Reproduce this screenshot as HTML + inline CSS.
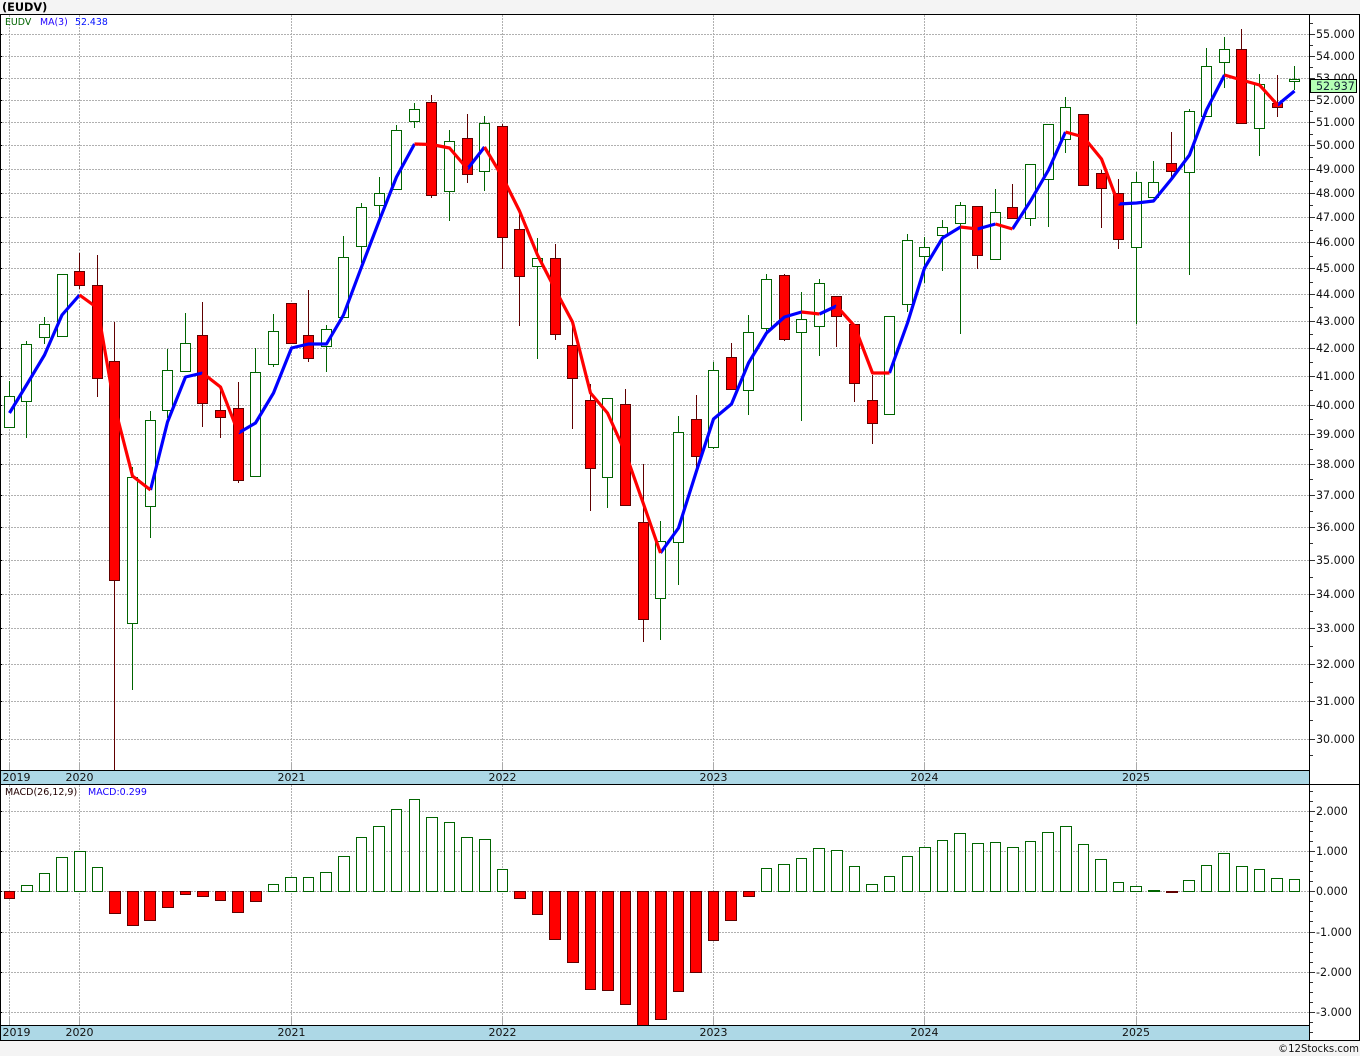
<!DOCTYPE html>
<html><head><meta charset="utf-8"><title>EUDV</title>
<style>html,body{margin:0;padding:0;background:#f4f4f4}svg{display:block}text{font-family:"DejaVu Sans","Liberation Sans",sans-serif}</style></head>
<body>
<svg width="1360" height="1056" viewBox="0 0 1360 1056" xmlns="http://www.w3.org/2000/svg">
<rect width="1360" height="1056" fill="#f4f4f4"/>
<rect x="0" y="14" width="1360" height="1027" fill="#fff"/>
<g fill="none" stroke="#b0b0b0" stroke-dasharray="2 1" shape-rendering="crispEdges">
<path d="M2 34.5H1309M2 56.5H1309M2 78.5H1309M2 100.5H1309M2 122.5H1309M2 145.5H1309M2 169.5H1309M2 193.5H1309M2 217.5H1309M2 242.5H1309M2 268.5H1309M2 294.5H1309M2 321.5H1309M2 348.5H1309M2 376.5H1309M2 405.5H1309M2 434.5H1309M2 464.5H1309M2 495.5H1309M2 527.5H1309M2 560.5H1309M2 594.5H1309M2 628.5H1309M2 664.5H1309M2 701.5H1309M2 739.5H1309"/>
<path d="M9.5 15V763M79.5 15V763M291.5 15V763M502.5 15V763M713.5 15V763M924.5 15V763M1136.5 15V763"/>
<path d="M2 811.5H1309M2 851.5H1309M2 891.5H1309M2 932.5H1309M2 972.5H1309M2 1012.5H1309"/>
<path d="M9.5 785V1018M79.5 785V1018M291.5 785V1018M502.5 785V1018M713.5 785V1018M924.5 785V1018M1136.5 785V1018"/>
</g>
<path fill="none" stroke="#aaa" shape-rendering="crispEdges" d="M9.5 763V770M79.5 763V770M291.5 763V770M502.5 763V770M713.5 763V770M924.5 763V770M1136.5 763V770M9.5 1018V1025M79.5 1018V1025M291.5 1018V1025M502.5 1018V1025M713.5 1018V1025M924.5 1018V1025M1136.5 1018V1025"/>

<!-- wicks -->
<path fill="none" stroke="#006400" shape-rendering="crispEdges" d="M9.5 381V427M26.5 341V438M44.5 317V344M132.5 467V690M150.5 411V538M167.5 349V418M185.5 313V371M255.5 348V476M273.5 314V367M326.5 325V372M343.5 236V317M361.5 203V263M379.5 177V217M396.5 125V189M414.5 103V128M449.5 130V221M484.5 116V191M537.5 238V359M607.5 398V508M660.5 521V640M678.5 416V585M713.5 362V449M748.5 315V415M766.5 274V332M801.5 292V421M819.5 279V356M907.5 234V312M924.5 237V283M942.5 220V271M960.5 202V334M995.5 189V259M1030.5 164V226M1048.5 124V227M1065.5 97V153M1136.5 172V324M1153.5 161V197M1189.5 109V275M1206.5 48V116M1224.5 37V88M1259.5 74V156M1294.5 66V90"/>
<path fill="none" stroke="#600000" shape-rendering="crispEdges" d="M79.5 253V289M97.5 255V397M114.5 322V770M202.5 302V427M220.5 388V438M238.5 382V483M308.5 290V362M431.5 95V198M467.5 114V183M502.5 124V269M519.5 213V326M555.5 244V340M572.5 322V429M590.5 384V511M625.5 389V505M643.5 464V642M696.5 395V468M731.5 343V389M784.5 274V341M836.5 296V347M854.5 324V402M872.5 375V444M977.5 206V269M1012.5 184V218M1101.5 170V228M1118.5 179V249M1171.5 132V177M1241.5 29V123M1277.5 75V117"/>

<!-- candle bodies -->
<path fill="#fff" stroke="#006400" shape-rendering="crispEdges" d="M4.5 396.5h10v31h-10zM21.5 344.5h10v57h-10zM39.5 324.5h10v13h-10zM57.5 274.5h10v62h-10zM127.5 477.5h10v146h-10zM145.5 420.5h10v86h-10zM162.5 370.5h10v40h-10zM180.5 343.5h10v28h-10zM250.5 372.5h10v104h-10zM268.5 331.5h10v33h-10zM321.5 329.5h10v17h-10zM338.5 257.5h10v60h-10zM356.5 207.5h10v39h-10zM374.5 193.5h10v12h-10zM391.5 130.5h10v59h-10zM409.5 109.5h10v12h-10zM444.5 141.5h10v50h-10zM479.5 123.5h10v48h-10zM532.5 258.5h10v8h-10zM602.5 398.5h10v79h-10zM655.5 541.5h10v57h-10zM673.5 432.5h10v110h-10zM708.5 370.5h10v77h-10zM743.5 332.5h10v58h-10zM761.5 279.5h10v49h-10zM796.5 319.5h10v13h-10zM814.5 283.5h10v43h-10zM884.5 316.5h10v98h-10zM902.5 240.5h10v64h-10zM919.5 247.5h10v9h-10zM937.5 227.5h10v8h-10zM955.5 205.5h10v18h-10zM990.5 212.5h10v47h-10zM1025.5 164.5h10v54h-10zM1043.5 124.5h10v55h-10zM1060.5 107.5h10v32h-10zM1131.5 182.5h10v65h-10zM1148.5 182.5h10v15h-10zM1184.5 111.5h10v61h-10zM1201.5 66.5h10v50h-10zM1219.5 49.5h10v13h-10zM1254.5 84.5h10v44h-10zM1289.5 79.5h10v2h-10z"/>
<path fill="#f00" stroke="#600000" shape-rendering="crispEdges" d="M74.5 271.5h10v14h-10zM92.5 285.5h10v93h-10zM109.5 361.5h10v219h-10zM197.5 335.5h10v68h-10zM215.5 410.5h10v7h-10zM233.5 408.5h10v72h-10zM286.5 303.5h10v40h-10zM303.5 335.5h10v23h-10zM426.5 102.5h10v93h-10zM462.5 138.5h10v36h-10zM497.5 126.5h10v111h-10zM514.5 229.5h10v47h-10zM550.5 258.5h10v76h-10zM567.5 345.5h10v33h-10zM585.5 400.5h10v68h-10zM620.5 404.5h10v101h-10zM638.5 522.5h10v97h-10zM691.5 419.5h10v37h-10zM726.5 357.5h10v32h-10zM779.5 275.5h10v64h-10zM831.5 296.5h10v20h-10zM849.5 324.5h10v59h-10zM867.5 400.5h10v23h-10zM972.5 206.5h10v49h-10zM1007.5 207.5h10v11h-10zM1078.5 114.5h10v71h-10zM1096.5 173.5h10v15h-10zM1113.5 193.5h10v46h-10zM1166.5 163.5h10v8h-10zM1236.5 49.5h10v74h-10zM1272.5 103.5h10v4h-10z"/>

<!-- MA(3) line -->
<g fill="none" stroke-width="3.2" stroke-linejoin="round" stroke-linecap="butt">
<g stroke="#00f">
<polyline points="9.5,413 26.5,385 44.5,355 62,315 79.5,295"/>
<polyline points="150.5,490 167.5,422 185.5,377 202.5,373"/>
<polyline points="238.5,433 255.5,423 273.5,393 291.5,348 308.5,344 326.5,344 343.5,315 361.5,267 379.5,220 396.5,177 414.5,144"/>
<polyline points="467.5,169 484.5,147"/>
<polyline points="660.5,553 678.5,528 696.5,471 713.5,419 731.5,404 748.5,363 766.5,333 784.5,317 801.5,312"/>
<polyline points="819.5,314 836.5,306"/>
<polyline points="889.5,373 907.5,323 924.5,268 942.5,238 960.5,227"/>
<polyline points="977.5,229 995.5,224"/>
<polyline points="1012.5,229 1030.5,201 1048.5,170 1065.5,132"/>
<polyline points="1118.5,204 1136.5,203 1153.5,201 1171.5,179 1189.5,155 1206.5,110 1224.5,75"/>
<polyline points="1277.5,105 1294.5,91"/>
</g>
<g stroke="#f00">
<polyline points="79.5,295 97.5,308 114.5,406 132.5,476 150.5,490"/>
<polyline points="202.5,373 220.5,387 238.5,433"/>
<polyline points="414.5,144 431.5,144.5 449.5,148 467.5,169"/>
<polyline points="484.5,147 502.5,177 519.5,211 537.5,255 555.5,290 572.5,322 590.5,393 607.5,413 625.5,453 643.5,504 660.5,553"/>
<polyline points="801.5,312 819.5,314"/>
<polyline points="836.5,306 854.5,326 872.5,373 889.5,373"/>
<polyline points="960.5,227 977.5,229"/>
<polyline points="995.5,224 1012.5,229"/>
<polyline points="1065.5,132 1083.5,137 1101.5,159 1118.5,204"/>
<polyline points="1224.5,75 1241.5,80 1259.5,85 1277.5,105"/>
</g>
</g>

<!-- MACD bars -->
<path fill="#fff" stroke="#006400" shape-rendering="crispEdges" d="M21.5 891.5V885.5H32.5V891.5ZM39.5 891.5V873.5H49.5V891.5ZM56.5 891.5V857.5H67.5V891.5ZM74.5 891.5V851.5H85.5V891.5ZM92.5 891.5V867.5H102.5V891.5ZM268.5 891.5V884.5H278.5V891.5ZM285.5 891.5V877.5H296.5V891.5ZM303.5 891.5V877.5H313.5V891.5ZM320.5 891.5V872.5H331.5V891.5ZM338.5 891.5V856.5H349.5V891.5ZM356.5 891.5V837.5H366.5V891.5ZM373.5 891.5V826.5H384.5V891.5ZM391.5 891.5V809.5H401.5V891.5ZM409.5 891.5V799.5H419.5V891.5ZM426.5 891.5V817.5H437.5V891.5ZM444.5 891.5V822.5H454.5V891.5ZM461.5 891.5V837.5H472.5V891.5ZM479.5 891.5V839.5H490.5V891.5ZM497.5 891.5V869.5H507.5V891.5ZM761.5 891.5V868.5H771.5V891.5ZM778.5 891.5V864.5H789.5V891.5ZM796.5 891.5V858.5H806.5V891.5ZM813.5 891.5V848.5H824.5V891.5ZM831.5 891.5V850.5H842.5V891.5ZM849.5 891.5V866.5H859.5V891.5ZM866.5 891.5V884.5H877.5V891.5ZM884.5 891.5V876.5H894.5V891.5ZM902.5 891.5V856.5H912.5V891.5ZM919.5 891.5V847.5H930.5V891.5ZM937.5 891.5V840.5H947.5V891.5ZM954.5 891.5V833.5H965.5V891.5ZM972.5 891.5V843.5H983.5V891.5ZM990.5 891.5V842.5H1000.5V891.5ZM1007.5 891.5V847.5H1018.5V891.5ZM1025.5 891.5V841.5H1035.5V891.5ZM1042.5 891.5V832.5H1053.5V891.5ZM1060.5 891.5V826.5H1071.5V891.5ZM1078.5 891.5V844.5H1088.5V891.5ZM1095.5 891.5V859.5H1106.5V891.5ZM1113.5 891.5V882.5H1123.5V891.5ZM1130.5 891.5V886.5H1141.5V891.5ZM1183.5 891.5V880.5H1194.5V891.5ZM1201.5 891.5V865.5H1211.5V891.5ZM1218.5 891.5V853.5H1229.5V891.5ZM1236.5 891.5V866.5H1247.5V891.5ZM1254.5 891.5V869.5H1264.5V891.5ZM1271.5 891.5V878.5H1282.5V891.5ZM1289.5 891.5V879.5H1299.5V891.5Z"/>
<path fill="#f00" stroke="#600000" shape-rendering="crispEdges" d="M4.5 891.5V898.5H14.5V891.5ZM109.5 891.5V913.5H120.5V891.5ZM127.5 891.5V925.5H138.5V891.5ZM144.5 891.5V920.5H155.5V891.5ZM162.5 891.5V907.5H173.5V891.5ZM180.5 891.5V894.5H190.5V891.5ZM197.5 891.5V896.5H208.5V891.5ZM215.5 891.5V900.5H225.5V891.5ZM232.5 891.5V912.5H243.5V891.5ZM250.5 891.5V901.5H261.5V891.5ZM514.5 891.5V898.5H525.5V891.5ZM532.5 891.5V914.5H542.5V891.5ZM549.5 891.5V939.5H560.5V891.5ZM567.5 891.5V962.5H578.5V891.5ZM585.5 891.5V989.5H595.5V891.5ZM602.5 891.5V990.5H613.5V891.5ZM620.5 891.5V1004.5H630.5V891.5ZM637.5 891.5V1025.5H648.5V891.5ZM655.5 891.5V1019.5H666.5V891.5ZM673.5 891.5V991.5H683.5V891.5ZM690.5 891.5V972.5H701.5V891.5ZM708.5 891.5V940.5H718.5V891.5ZM725.5 891.5V920.5H736.5V891.5ZM743.5 891.5V896.5H754.5V891.5Z"/>
<rect x="1148" y="890" width="12" height="2" fill="#006400"/>
<rect x="1166" y="891" width="12" height="2" fill="#600000"/>

<!-- axis bands -->
<rect x="1" y="770" width="1308" height="14" fill="#add8e6"/>
<rect x="1" y="1025" width="1308" height="15" fill="#add8e6"/>
<path fill="none" stroke="#000" shape-rendering="crispEdges" d="M0 14.5H1360M0 770.5H1309M0 784.5H1360M0 1025.5H1309M0 1040.5H1360M0.5 14V1041M1309.5 14V1041M1359.5 14V1041"/>
<path fill="none" stroke="#000" shape-rendering="crispEdges" d="M1 34.5H2M1 56.5H2M1 78.5H2M1 100.5H2M1 122.5H2M1 145.5H2M1 169.5H2M1 193.5H2M1 217.5H2M1 242.5H2M1 268.5H2M1 294.5H2M1 321.5H2M1 348.5H2M1 376.5H2M1 405.5H2M1 434.5H2M1 464.5H2M1 495.5H2M1 527.5H2M1 560.5H2M1 594.5H2M1 628.5H2M1 664.5H2M1 701.5H2M1 739.5H2M1 811.5H2M1 851.5H2M1 891.5H2M1 932.5H2M1 972.5H2M1 1012.5H2"/>

<!-- right axis ticks -->
<path fill="none" stroke="#333" shape-rendering="crispEdges" d="M1310 34.5H1315M1310 56.5H1315M1310 78.5H1315M1310 100.5H1315M1310 122.5H1315M1310 145.5H1315M1310 169.5H1315M1310 193.5H1315M1310 217.5H1315M1310 242.5H1315M1310 268.5H1315M1310 294.5H1315M1310 321.5H1315M1310 348.5H1315M1310 376.5H1315M1310 405.5H1315M1310 434.5H1315M1310 464.5H1315M1310 495.5H1315M1310 527.5H1315M1310 560.5H1315M1310 594.5H1315M1310 628.5H1315M1310 664.5H1315M1310 701.5H1315M1310 739.5H1315M1310 811.5H1315M1310 851.5H1315M1310 891.5H1315M1310 932.5H1315M1310 972.5H1315M1310 1012.5H1315"/>
<path fill="none" stroke="#333" shape-rendering="crispEdges" d="M1310 23.5H1313M1310 45.5H1313M1310 67.5H1313M1310 89.5H1313M1310 111.5H1313M1310 134.5H1313M1310 157.5H1313M1310 181.5H1313M1310 205.5H1313M1310 230.5H1313M1310 256.5H1313M1310 282.5H1313M1310 307.5H1313M1310 334.5H1313M1310 362.5H1313M1310 390.5H1313M1310 419.5H1313M1310 449.5H1313M1310 479.5H1313M1310 511.5H1313M1310 543.5H1313M1310 577.5H1313M1310 611.5H1313M1310 646.5H1313M1310 682.5H1313M1310 720.5H1313M1310 755.5H1313M1310 791.5H1313M1310 801.5H1313M1310 821.5H1313M1310 831.5H1313M1310 841.5H1313M1310 861.5H1313M1310 871.5H1313M1310 881.5H1313M1310 901.5H1313M1310 911.5H1313M1310 921.5H1313M1310 942.5H1313M1310 952.5H1313M1310 962.5H1313M1310 982.5H1313M1310 992.5H1313M1310 1002.5H1313M1310 1022.5H1313M1310 1032.5H1313"/>

<!-- text -->
<text x="2" y="11" font-size="11.3" font-weight="700" fill="#000">(EUDV)</text>
<g font-size="9.4">
<text x="5" y="25" fill="#006400">EUDV</text>
<text x="40" y="25" fill="#2000ff">MA(3)</text>
<text x="75" y="25" fill="#0010ff">52.438</text>
</g>
<g font-size="9.5">
<text x="5" y="795" fill="#200">MACD(26,12,9)</text>
<text x="88" y="795" fill="#1800ff">MACD:0.299</text>
</g>
<g font-size="11" fill="#111">
<text x="2.5" y="781">2019</text><text x="65.5" y="781">2020</text><text x="277.5" y="781">2021</text><text x="488.5" y="781">2022</text><text x="699.5" y="781">2023</text><text x="910.5" y="781">2024</text><text x="1122" y="781">2025</text>
<text x="2.5" y="1036">2019</text><text x="65.5" y="1036">2020</text><text x="277.5" y="1036">2021</text><text x="488.5" y="1036">2022</text><text x="699.5" y="1036">2023</text><text x="910.5" y="1036">2024</text><text x="1122" y="1036">2025</text>
</g>
<g font-size="11.1" fill="#111">
<text x="1316" y="38">55.000</text><text x="1316" y="60">54.000</text><text x="1316" y="82">53.000</text><text x="1316" y="104">52.000</text><text x="1316" y="126">51.000</text><text x="1316" y="149">50.000</text><text x="1316" y="173">49.000</text><text x="1316" y="197">48.000</text><text x="1316" y="221">47.000</text><text x="1316" y="246">46.000</text><text x="1316" y="272">45.000</text><text x="1316" y="298">44.000</text><text x="1316" y="325">43.000</text><text x="1316" y="352">42.000</text><text x="1316" y="380">41.000</text><text x="1316" y="409">40.000</text><text x="1316" y="438">39.000</text><text x="1316" y="468">38.000</text><text x="1316" y="499">37.000</text><text x="1316" y="531">36.000</text><text x="1316" y="564">35.000</text><text x="1316" y="598">34.000</text><text x="1316" y="632">33.000</text><text x="1316" y="668">32.000</text><text x="1316" y="705">31.000</text><text x="1316" y="743">30.000</text>
<text x="1316" y="815">2.000</text><text x="1316" y="855">1.000</text><text x="1316" y="895">0.000</text><text x="1316" y="936">-1.000</text><text x="1316" y="976">-2.000</text><text x="1316" y="1016">-3.000</text>
</g>
<rect x="1310.5" y="79.5" width="46" height="13" fill="#b4ffb4" stroke="#000" shape-rendering="crispEdges"/>
<text x="1316" y="90" font-size="11.1" fill="#123">52.937</text>
<text x="1278" y="1052" font-size="11" fill="#111" textLength="81" lengthAdjust="spacingAndGlyphs">©12Stocks.com</text>
</svg>
</body></html>
